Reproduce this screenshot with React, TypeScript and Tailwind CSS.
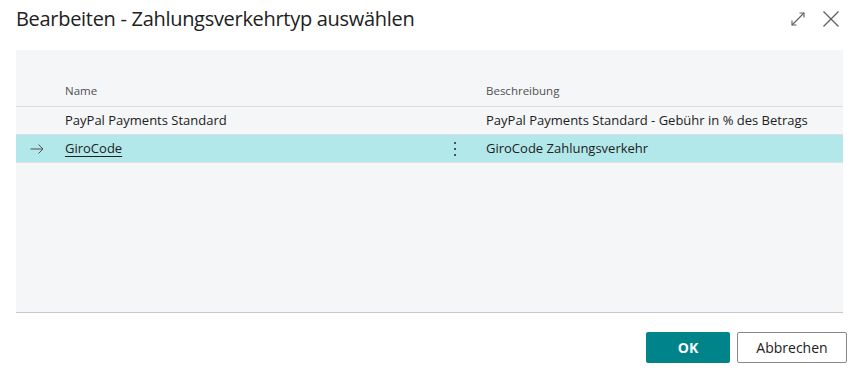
import { useState } from "react";

type Row = {
  id: string;
  name: string;
  description: string;
};

const rows: Row[] = [
  {
    id: "paypal",
    name: "PayPal Payments Standard",
    description: "PayPal Payments Standard - Gebühr in % des Betrags",
  },
  { id: "giro", name: "GiroCode", description: "GiroCode Zahlungsverkehr" },
];

export default function App() {
  const [selected, setSelected] = useState("giro");

  return (
    <div
      className="w-[859px] h-[370px] bg-white flex flex-col text-[#212121]"
      style={{ fontFamily: '"Open Sans", "Noto Sans", sans-serif' }}
    >
      {/* Header */}
      <div className="h-[50px] flex items-start justify-between pl-4 pr-[19px] pt-[5px]">
        <div className="text-[20px] leading-[28px] tracking-[-0.3px] text-[#212121]">
          Bearbeiten - Zahlungsverkehrtyp auswählen
        </div>
        <div className="flex items-center gap-[16px] pt-[5px]">
          <svg width="16" height="16" viewBox="0 0 16 16" fill="none" stroke="#605e5c" strokeWidth="1.1">
            <path d="M2 14 L14 2" />
            <path d="M9.5 2 H14 V6.5" />
            <path d="M2 9.5 V14 H6.5" />
          </svg>
          <svg width="18" height="18" viewBox="0 0 18 18" fill="none" stroke="#605e5c" strokeWidth="1.3">
            <path d="M1.5 1.5 L16.5 16.5" />
            <path d="M16.5 1.5 L1.5 16.5" />
          </svg>
        </div>
      </div>

      {/* Grid */}
      <div className="mx-4 h-[263px] bg-[#f5f6f8] border-b border-[#c8c8c8] flex flex-col pt-[26px] text-[13px]">
        <div className="h-[31px] flex items-center border-b border-[#dcdcdc] text-[11.5px] text-[#505050]">
          <div className="w-[49px]" />
          <div className="w-[421px]">Name</div>
          <div>Beschreibung</div>
        </div>
        {rows.map((row) => {
          const isSel = selected === row.id;
          return (
            <div
              key={row.id}
              onClick={() => setSelected(row.id)}
              className={
                "h-[28px] flex items-center border-b border-[#dedfe1] " +
                (isSel ? "bg-[#b2e8ea]" : "")
              }
            >
              <div className="w-[49px] pl-[14px] flex items-center">
                {isSel && (
                  <svg width="14" height="10" viewBox="0 0 14 10" fill="none" stroke="#505050" strokeWidth="1">
                    <path d="M0.5 5 H13" />
                    <path d="M8.5 0.5 L13 5 L8.5 9.5" />
                  </svg>
                )}
              </div>
              <div className="w-[421px] flex items-center justify-between pr-[30px]">
                <span className={isSel ? "underline underline-offset-[3px]" : ""}>{row.name}</span>
                {isSel && (
                  <span className="flex flex-col gap-[4px] items-center">
                    <span className="w-[2px] h-[2px] bg-[#505050]" />
                    <span className="w-[2px] h-[2px] bg-[#505050]" />
                    <span className="w-[2px] h-[2px] bg-[#505050]" />
                  </span>
                )}
              </div>
              <div>{row.description}</div>
            </div>
          );
        })}
      </div>

      {/* Footer */}
      <div className="flex justify-end gap-[7px] pr-[12px] pt-[19px]">
        <button className="w-[84px] h-[31px] bg-[#008489] rounded-[2px] text-white text-[14px] font-bold">
          OK
        </button>
        <button className="w-[110px] h-[31px] bg-white border border-[#8a8886] rounded-[2px] text-[#212121] text-[14px]">
          Abbrechen
        </button>
      </div>
    </div>
  );
}
